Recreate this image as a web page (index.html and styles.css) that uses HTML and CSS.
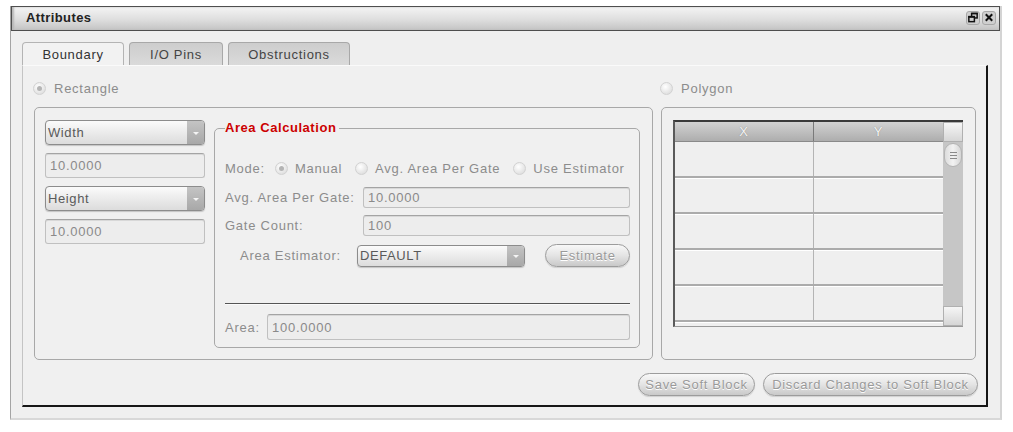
FILE: index.html
```html
<!DOCTYPE html>
<html>
<head>
<meta charset="utf-8">
<link rel="stylesheet" href="styles.css">
</head>
<body>
<div class="window">
  <div class="titlebar">
    <span class="title">Attributes</span>
    <div class="tb-icons">
      <span class="tb-btn"><svg width="13" height="13" viewBox="0 0 13 13"><rect x="5" y="2" width="6" height="5" fill="none" stroke="#111" stroke-width="1.6"/><rect x="5" y="1.5" width="6.5" height="1.6" fill="#111"/><rect x="2" y="5.5" width="6" height="5.5" fill="#cfcfcf" stroke="#111" stroke-width="1.6"/><rect x="1.5" y="5" width="7" height="1.8" fill="#111"/></svg></span>
      <span class="tb-btn"><svg width="13" height="13" viewBox="0 0 13 13"><path d="M3 3 L10 10 M10 3 L3 10" stroke="#111" stroke-width="2.2" fill="none"/></svg></span>
    </div>
  </div>
  <div class="content">
    <div class="tabs">
      <div class="tab active w1">Boundary</div>
      <div class="tab w2">I/O Pins</div>
      <div class="tab w3">Obstructions</div>
    </div>
    <div class="panel">
      <div class="radio-line"><span class="radio on"></span><span>Rectangle</span></div>
      <div class="radio-line poly"><span class="radio"></span><span>Polygon</span></div>

      <div class="group left">
        <div class="dims">
          <div class="combo"><span class="combo-text">Width</span><span class="combo-arrow"></span></div>
          <div class="field">10.0000</div>
          <div class="combo"><span class="combo-text">Height</span><span class="combo-arrow"></span></div>
          <div class="field">10.0000</div>
        </div>
        <fieldset class="calc">
          <legend>Area Calculation</legend>
          <div class="mode-row">
            <span class="mode-label">Mode:</span>
            <span class="radio on"></span><span class="opt">Manual</span>
            <span class="radio"></span><span class="opt">Avg. Area Per Gate</span>
            <span class="radio"></span><span>Use Estimator</span>
          </div>
          <div class="frow r-avg"><span class="flabel">Avg. Area Per Gate:</span><div class="field thin">10.0000</div></div>
          <div class="frow r-gate"><span class="flabel">Gate Count:</span><div class="field thin">100</div></div>
          <div class="frow r-est">
            <span class="flabel est">Area Estimator:</span>
            <div class="combo est-combo"><span class="combo-text">DEFAULT</span><span class="combo-arrow"></span></div>
            <div class="btn est-btn">Estimate</div>
          </div>
          <div class="sep"></div>
          <div class="frow r-area"><span class="flabel area">Area:</span><div class="field">100.0000</div></div>
        </fieldset>
      </div>

      <div class="group right">
        <div class="table">
          <div class="cols">
            <div class="thead"><div class="th cx">X</div><div class="th cy">Y</div></div>
            <div class="trow"><div class="td cx"></div><div class="td cy"></div></div>
            <div class="trow"><div class="td cx"></div><div class="td cy"></div></div>
            <div class="trow"><div class="td cx"></div><div class="td cy"></div></div>
            <div class="trow"><div class="td cx"></div><div class="td cy"></div></div>
            <div class="trow"><div class="td cx"></div><div class="td cy"></div></div>
          </div>
          <div class="scrollbar">
            <div class="sb-btn"></div>
            <div class="sb-track"><div class="sb-thumb"><span></span><span></span><span></span></div></div>
            <div class="sb-btn"></div>
          </div>
        </div>
      </div>

      <div class="actions">
        <div class="btn save">Save Soft Block</div>
        <div class="btn discard">Discard Changes to Soft Block</div>
      </div>
    </div>
  </div>
</div>
</body>
</html>
```
FILE: styles.css
```css
* { box-sizing: border-box; }
body {
  margin: 0;
  background: #ffffff;
  font-family: "Liberation Sans", Arial, sans-serif;
  font-size: 13px;
  letter-spacing: 0.75px;
  color: #8c8c8c;
}
.window {
  margin: 6px 0 0 10px;
  width: 992px;
  height: 414px;
  background: #efefef;
  border-left: 1px solid #a4a4a4;
  border-right: 2px solid #d4d4d4;
  border-bottom: 2px solid #d8d8d8;
  display: flex;
  flex-direction: column;
}
.titlebar {
  height: 25px;
  flex: none;
  border: 1px solid #4e4e4e;
  background: linear-gradient(#f4f4f4, #dedede 55%, #c4c4c4);
  box-shadow: inset 2px 0 2px #b8b8b8;
  display: flex;
  align-items: center;
  justify-content: space-between;
  padding: 0 3px 2px 14px;
}
.title {
  font-weight: bold;
  color: #222;
  letter-spacing: 0.4px;
}
.tb-icons { display: flex; gap: 2px; }
.tb-btn {
  width: 14px;
  height: 14px;
  border-radius: 3px;
  background: #cfcfcf;
  border: 1px solid #a8a8a8;
  display: flex;
  align-items: center;
  justify-content: center;
}
.content {
  flex: 1;
  padding: 11px 0 0 11px;
}
.tabs {
  display: flex;
  height: 23px;
}
.tab {
  height: 23px;
  border: 1px solid #a8a8a8;
  border-bottom: none;
  border-radius: 4px 4px 0 0;
  background: linear-gradient(#cdcdcd, #dadada);
  color: #444;
  display: flex;
  align-items: center;
  justify-content: center;
  padding-top: 1px;
  letter-spacing: 0.7px;
}
.tab.active { background: #f2f2f2; color: #333; border-color: #b4b4b4; }
.w1 { width: 102px; margin-right: 5px; }
.w2 { width: 94px; margin-right: 5px; }
.w3 { width: 122px; }
.panel {
  width: 966px;
  height: 342px;
  background: #f0f0f0;
  border-left: 1px solid #c4c4c4;
  border-top: 1px solid #fafafa;
  border-right: 2px solid #161616;
  border-bottom: 2px solid #161616;
  padding: 14px 10px 0 11px;
  display: grid;
  grid-template-columns: 619px 315px;
  grid-template-rows: 16px 253px 22px;
  column-gap: 8px;
  row-gap: 11px;
}
.radio-line {
  display: flex;
  align-items: center;
  gap: 8px;
  margin-left: -1px;
}
.radio {
  width: 13px;
  height: 13px;
  border-radius: 50%;
  border: 1px solid #d2d2d2;
  background: radial-gradient(circle at 40% 35%, #ffffff, #e2e2e2 70%, #d4d4d4);
  flex: none;
  position: relative;
}
.radio.on::after {
  content: "";
  position: absolute;
  left: 3px;
  top: 3px;
  width: 5px;
  height: 5px;
  border-radius: 50%;
  background: #b4b4b4;
}
.group {
  border: 1px solid #a8a8a8;
  border-radius: 5px;
}
.group.left {
  display: flex;
  gap: 9px;
  padding: 12px 11px 0 10px;
}
.dims {
  width: 160px;
  display: flex;
  flex-direction: column;
  gap: 8px;
}
.combo {
  height: 25px;
  display: flex;
  border: 1px solid #8c8c8c;
  border-radius: 4px;
  background: linear-gradient(#fbfbfb, #e8e8e8 60%, #dcdcdc);
  box-shadow: 0 1px 1px #c4c4c4;
  overflow: hidden;
}
.combo-text {
  flex: 1;
  color: #5a5a5a;
  padding-left: 2px;
  display: flex;
  align-items: center;
  letter-spacing: 0.6px;
}
.combo-arrow {
  width: 17px;
  background: linear-gradient(#c4c4c4, #a8a8a8);
  position: relative;
}
.combo-arrow::after {
  content: "";
  position: absolute;
  left: 6px;
  top: 50%;
  margin-top: -1px;
  border-left: 3px solid transparent;
  border-right: 3px solid transparent;
  border-top: 3px solid #f4f4f4;
}
.field {
  height: 25px;
  border: 1px solid #c0c0c0;
  border-top-color: #a4a4a4;
  border-radius: 3px;
  background: #ededed;
  padding-left: 4px;
  display: flex;
  align-items: center;
  color: #8a8a8a;
  box-shadow: inset 0 1px 0 #d8d8d8;
}
.field.thin { height: 21px; }
.calc {
  margin: 0;
  min-width: 0;
  width: 426px;
  height: 228px;
  border: 1px solid #a8a8a8;
  border-radius: 5px;
  padding: 0 9px 7px 10px;
}
.calc legend {
  padding: 0 3px 0 0;
  color: #cc0000;
  font-weight: bold;
  line-height: 16px;
  letter-spacing: 0.55px;
}
.mode-row {
  margin-top: 24px;
  height: 16px;
  display: flex;
  align-items: center;
}
.mode-label { margin-right: 10px; }
.mode-row .radio { margin-right: 7px; }
.opt { margin-right: 13px; }
.frow { display: flex; align-items: center; }
.flabel { width: 138px; flex: none; }
.frow .field { flex: 1; }
.r-avg { margin-top: 11px; height: 21px; }
.r-gate { margin-top: 7px; height: 21px; }
.r-est { margin-top: 8px; height: 23px; }
.flabel.est { width: 132px; padding-left: 15px; }
.est-combo { width: 168px; height: 22px; }
.btn {
  height: 23px;
  border: 1px solid #9c9c9c;
  border-radius: 12px;
  background: linear-gradient(#f8f8f8, #e4e4e4 50%, #c9c9c9);
  color: #9a9a9a;
  text-shadow: 0 1px 0 #ffffff;
  display: flex;
  align-items: center;
  justify-content: center;
  padding-bottom: 1px;
  box-shadow: 0 1px 1px #d0d0d0;
  letter-spacing: 0.7px;
}
.est-btn { width: 85px; margin-left: 20px; }
.sep {
  margin-top: 36px;
  height: 2px;
  border-top: 1px solid #555;
  border-bottom: 1px solid #fbfbfb;
}
.r-area { margin-top: 9px; height: 26px; }
.flabel.area { width: 42px; }
.r-area .field { height: 26px; }
.group.right { padding: 12px 11px 0 11px; }
.table {
  display: flex;
  width: 290px;
  height: 207px;
  border-top: 2px solid #3a3a3a;
  border-left: 2px solid #5a5a5a;
  border-bottom: 1px solid #9a9a9a;
  background: #efefef;
}
.cols { width: 268px; overflow: hidden; }
.thead {
  display: flex;
  height: 20px;
  background: linear-gradient(#d2d2d2, #adadad);
  border-bottom: 1px solid #8a8a8a;
}
.th {
  color: #f6f6f6;
  text-shadow: 0 0 1px #7a7a7a;
  text-align: center;
  line-height: 19px;
}
.cx { width: 139px; border-right: 1px solid #b4b4b4; }
.cy { width: 129px; }
.thead .cx { border-right: 1px solid #7a7a7a; }
.trow {
  display: flex;
  height: 36px;
  border-bottom: 2px solid #ababab;
  box-shadow: 0 1px 0 #ffffff;
}
.td { height: 100%; }
.scrollbar {
  width: 20px;
  background: #c6c6c6;
  display: flex;
  flex-direction: column;
}
.sb-btn {
  height: 20px;
  background: linear-gradient(#f6f6f6, #d6d6d6);
  border: 1px solid #b0b0b0;
}
.sb-track { flex: 1; padding: 1px 1px 0 1px; }
.sb-thumb {
  width: 18px;
  height: 24px;
  border-radius: 9px;
  border: 1px solid #b4b4b4;
  background: linear-gradient(90deg, #dcdcdc, #f2f2f2 50%, #d6d6d6);
  display: flex;
  flex-direction: column;
  align-items: center;
  justify-content: center;
  gap: 2px;
}
.sb-thumb span { width: 7px; height: 1px; background: #8a8a8a; }
.actions {
  grid-column: 1 / 3;
  display: flex;
  justify-content: flex-end;
  gap: 8px;
  margin-top: 2px;
  margin-right: -2px;
}
.save { width: 117px; }
.discard { width: 215px; }
```
